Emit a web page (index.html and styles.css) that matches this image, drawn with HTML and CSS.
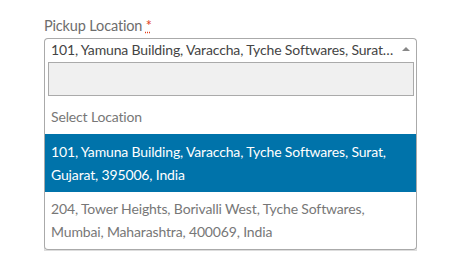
FILE: index.html
```html
<!DOCTYPE html>
<html>
<head>
<meta charset="utf-8">
<link rel="stylesheet" href="styles.css">
</head>
<body>
<div class="field">
  <label class="label">Pickup Location <abbr class="req" title="required">*</abbr></label>
  <div class="select">
    <div class="selection">
      <span class="rendered">101, Yamuna Building, Varaccha, Tyche Softwares, Surat, Gujarat, 395006, India</span>
      <span class="arrow"></span>
    </div>
    <div class="dropdown">
      <div class="search"><input class="search-field" type="text"></div>
      <ul class="results">
        <li class="opt">Select Location</li>
        <li class="opt active">101, Yamuna Building, Varaccha, Tyche Softwares, Surat, Gujarat, 395006, India</li>
        <li class="opt">204, Tower Heights, Borivalli West, Tyche Softwares, Mumbai, Maharashtra, 400069, India</li>
      </ul>
    </div>
  </div>
  <textarea class="notes"></textarea>
</div>
</body>
</html>
```
FILE: styles.css
```css
html, body {
  margin: 0;
  padding: 0;
  background: #fff;
}
body {
  font-family: "Lato", "Liberation Sans", sans-serif;
  font-size: 14px;
  letter-spacing: -0.15px;
}
.field {
  margin-left: 44px;
  padding-top: 16px;
  width: 373px;
}
.label {
  display: block;
  color: #6d6d6d;
  font-size: 14.5px;
  line-height: 20px;
  height: 22px;
}
.req {
  color: #e2401c;
  text-decoration: underline dotted;
  border: none;
}
.select {
  position: relative;
}
.selection {
  box-sizing: border-box;
  height: 21px;
  border: 1px solid #aaa;
  border-bottom: none;
  border-radius: 4px 4px 0 0;
  display: flex;
  align-items: center;
  padding: 0 8px 0 6px;
  color: #444;
}
.rendered {
  flex: 1;
  white-space: nowrap;
  overflow: hidden;
  text-overflow: ellipsis;
  line-height: 20px;
  padding-top: 2px;
}
.arrow {
  width: 0;
  height: 0;
  border-left: 4px solid transparent;
  border-right: 4px solid transparent;
  border-bottom: 4px solid #888;
  margin-left: 8px;
  margin-right: -2px;
}
.dropdown {
  position: absolute;
  left: 0;
  right: 0;
  top: 100%;
  box-sizing: border-box;
  background: #fff;
  border: 1px solid #aaa;
  border-top: none;
  border-radius: 0 0 4px 4px;
  z-index: 2;
}
.search {
  padding: 3px 2px 4px 3px;
}
.search-field {
  display: block;
  box-sizing: border-box;
  width: 100%;
  height: 34px;
  margin: 0;
  border: 1px solid #aaa;
  background: #f0f0f0;
  outline: none;
}
.results {
  list-style: none;
  margin: 0;
  padding: 0;
}
.opt {
  padding: 5px 6px 6px 6px;
  line-height: 23px;
  color: #777;
}
.opt.active {
  background: #0073aa;
  color: #fff;
  padding: 6px 6px 6px 6px;
}
.notes {
  display: block;
  box-sizing: border-box;
  width: 373px;
  height: 192px;
  margin: 0;
  border: 1px solid #ddd;
  background: #f2f2f2;
  resize: both;
}
```
